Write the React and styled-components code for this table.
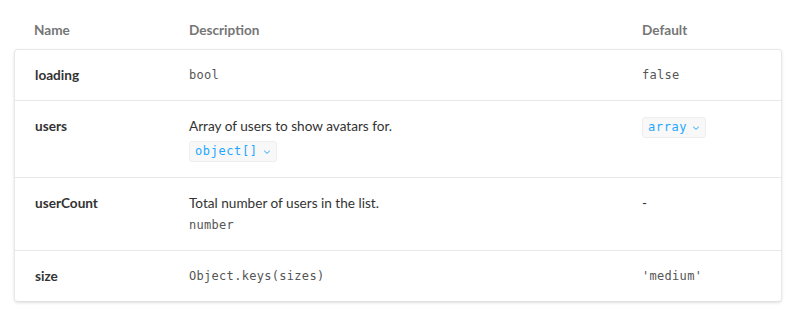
import styled, { createGlobalStyle } from 'styled-components';

const GlobalStyle = createGlobalStyle`
  html, body {
    margin: 0;
    padding: 0;
    background: #fff;
  }
  body {
    font-family: Lato, "Open Sans", sans-serif;
    color: #333;
  }
`;

const rows = [
  { name: 'loading', type: 'bool', def: 'false' },
  {
    name: 'users',
    desc: 'Array of users to show avatars for.',
    typeBadge: 'object[]',
    defBadge: 'array',
  },
  {
    name: 'userCount',
    desc: 'Total number of users in the list.',
    type: 'number',
    def: '-',
    plainDef: true,
  },
  { name: 'size', type: 'Object.keys(sizes)', def: "'medium'" },
];

function Chevron() {
  return (
    <svg width="8" height="8" viewBox="0 0 8 8" fill="none">
      <path d="M1.2 2.8 L4 5.4 L6.8 2.8" stroke="currentColor" strokeWidth="1" />
    </svg>
  );
}

export default function App() {
  return (
    <>
      <GlobalStyle />
      <Wrapper>
        <Table>
          <colgroup>
            <Col $width="155px" />
            <Col />
            <Col $width="160px" />
          </colgroup>
          <thead>
            <tr>
              <HeadCell>Name</HeadCell>
              <HeadCell>Description</HeadCell>
              <HeadCell>Default</HeadCell>
            </tr>
          </thead>
          <Body>
            {rows.map((row) => (
              <Row key={row.name}>
                <Cell>
                  <Name>{row.name}</Name>
                </Cell>
                <Cell>
                  {row.desc && <Desc>{row.desc}</Desc>}
                  {row.type && <Code $below={!!row.desc}>{row.type}</Code>}
                  {row.typeBadge && (
                    <Badge $below>
                      {row.typeBadge}
                      <Chevron />
                    </Badge>
                  )}
                </Cell>
                <Cell>
                  {row.defBadge ? (
                    <Badge>
                      {row.defBadge}
                      <Chevron />
                    </Badge>
                  ) : row.plainDef ? (
                    <Desc>{row.def}</Desc>
                  ) : (
                    <Code>{row.def}</Code>
                  )}
                </Cell>
              </Row>
            ))}
          </Body>
        </Table>
      </Wrapper>
    </>
  );
}

const Wrapper = styled.div`
  padding: 10px 18px 18px 14px;
`;

const Table = styled.table`
  width: 768px;
  table-layout: fixed;
  border-collapse: separate;
  border-spacing: 0;
  font-size: 13.6px;
  line-height: 20px;
`;

const Col = styled.col`
  width: ${(p) => p.$width || 'auto'};
`;

const HeadCell = styled.th`
  text-align: left;
  font-weight: 700;
  color: #767676;
  padding: 10px 20px 9px 20px;
  height: 20px;
  line-height: 20px;
`;

const Body = styled.tbody`
  background: #fff;
  box-shadow: 0 1px 3px rgba(0, 0, 0, 0.12);
  border-radius: 4px;

  tr:first-child td {
    border-top: 1px solid #e8e8e8;
  }
  tr:first-child td:first-child {
    border-top-left-radius: 4px;
  }
  tr:first-child td:last-child {
    border-top-right-radius: 4px;
  }
  tr:last-child td:first-child {
    border-bottom-left-radius: 4px;
  }
  tr:last-child td:last-child {
    border-bottom-right-radius: 4px;
  }
  tr + tr td {
    border-top: 1px solid #e8e8e8;
  }
  tr td:first-child {
    border-left: 1px solid #e8e8e8;
  }
  tr td:last-child {
    border-right: 1px solid #e8e8e8;
  }
  tr:last-child td {
    border-bottom: 1px solid #e0e0e0;
  }
`;

const Row = styled.tr``;

const Cell = styled.td`
  vertical-align: top;
  padding: 15px 20px 15px 20px;
  color: #333;
`;

const Name = styled.div`
  font-weight: 700;
  height: 20px;
`;

const Desc = styled.div`
  color: #333;
  height: 20px;
`;

const Code = styled.div`
  font-family: "DejaVu Sans Mono", "Liberation Mono", monospace;
  font-size: 12px;
  letter-spacing: 0.3px;
  color: #555;
  height: 20px;
  line-height: 20px;
  margin-top: ${(p) => (p.$below ? '2px' : '0')};
`;

const Badge = styled.div`
  display: inline-flex;
  align-items: center;
  gap: 5px;
  box-sizing: border-box;
  height: 21px;
  padding: 0 5px;
  margin-top: ${(p) => (p.$below ? '5px' : '1px')};
  border: 1px solid #eeeeee;
  border-radius: 3px;
  background: #f8f8f8;
  font-family: "DejaVu Sans Mono", "Liberation Mono", monospace;
  font-size: 12px;
  line-height: 19px;
  letter-spacing: 0.6px;
  color: #1ea7fd;
  vertical-align: top;
  svg {
    color: #1ea7fd;
  }
`;
